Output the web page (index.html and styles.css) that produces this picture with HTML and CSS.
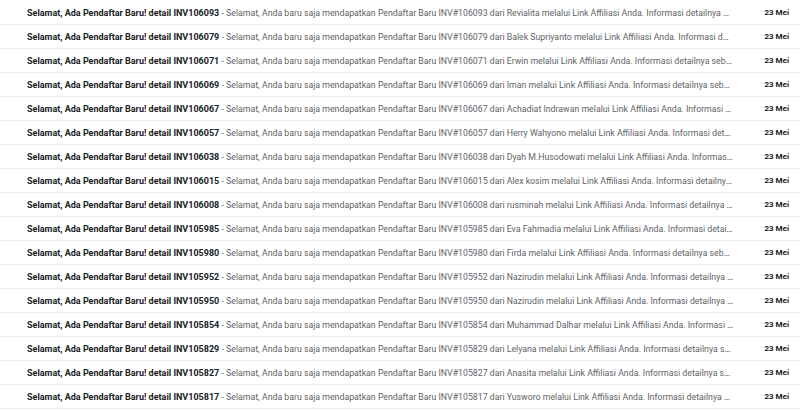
FILE: index.html
```html
<!DOCTYPE html>
<html lang="id">
<head>
    <meta charset="UTF-8">
    <meta name="viewport" content="width=device-width, initial-scale=1.0">
    <title>Kotak Masuk</title>
    <link rel="stylesheet" href="styles.css">
</head>
<body>
    <div class="mail-list" id="mail-list"></div>

    <script>
      const rows = [
          ['106093', 'Revialita'],
          ['106079', 'Balek Supriyanto'],
          ['106071', 'Erwin'],
          ['106069', 'Iman'],
          ['106067', 'Achadiat Indrawan'],
          ['106057', 'Herry Wahyono'],
          ['106038', 'Dyah M.Husodowati'],
          ['106015', 'Alex kosim'],
          ['106008', 'rusminah'],
          ['105985', 'Eva Fahmadia'],
          ['105980', 'Firda'],
          ['105952', 'Nazirudin'],
          ['105950', 'Nazirudin'],
          ['105854', 'Muhammad Dalhar'],
          ['105829', 'Lelyana'],
          ['105827', 'Anasita'],
          ['105817', 'Yusworo']
      ];

      const list = document.getElementById('mail-list');

      rows.forEach(function (r) {
          list.innerHTML += `<div class="mail-row">
              <div class="mail-text">
                  <span class="subject">Selamat, Ada Pendaftar Baru! detail INV${r[0]}</span>
                  <span class="snippet"> - Selamat, Anda baru saja mendapatkan Pendaftar Baru INV#${r[0]} dari ${r[1]} melalui Link Affiliasi Anda. Informasi detailnya sebagai berikut</span>
              </div>
              <div class="mail-date">23 Mei</div>
          </div>`;
      });
  </script>
</body>
</html>
```

FILE: styles.css
```css
body {
    margin: 0;
    padding: 0;
    background-color: #fff;
    font-family: Roboto, Arial, sans-serif;
    font-size: 9px;
    color: #202124;
}

.mail-list {
    display: flex;
    flex-direction: column;
    padding-top: 1px;
}

.mail-row {
    display: flex;
    align-items: center;
    height: 23px;
    border-bottom: 1px solid #eceff1;
    padding: 0 11px 0 27px;
}

.mail-text {
    flex: 1;
    min-width: 0;
    white-space: nowrap;
    overflow: hidden;
    text-overflow: ellipsis;
    padding-right: 31px;
}

.subject {
    font-weight: bold;
}

.snippet {
    color: #5f6368;
    font-size: 8.75px;
}

.mail-date {
    font-size: 8px;
    font-weight: bold;
    white-space: nowrap;
}
```
